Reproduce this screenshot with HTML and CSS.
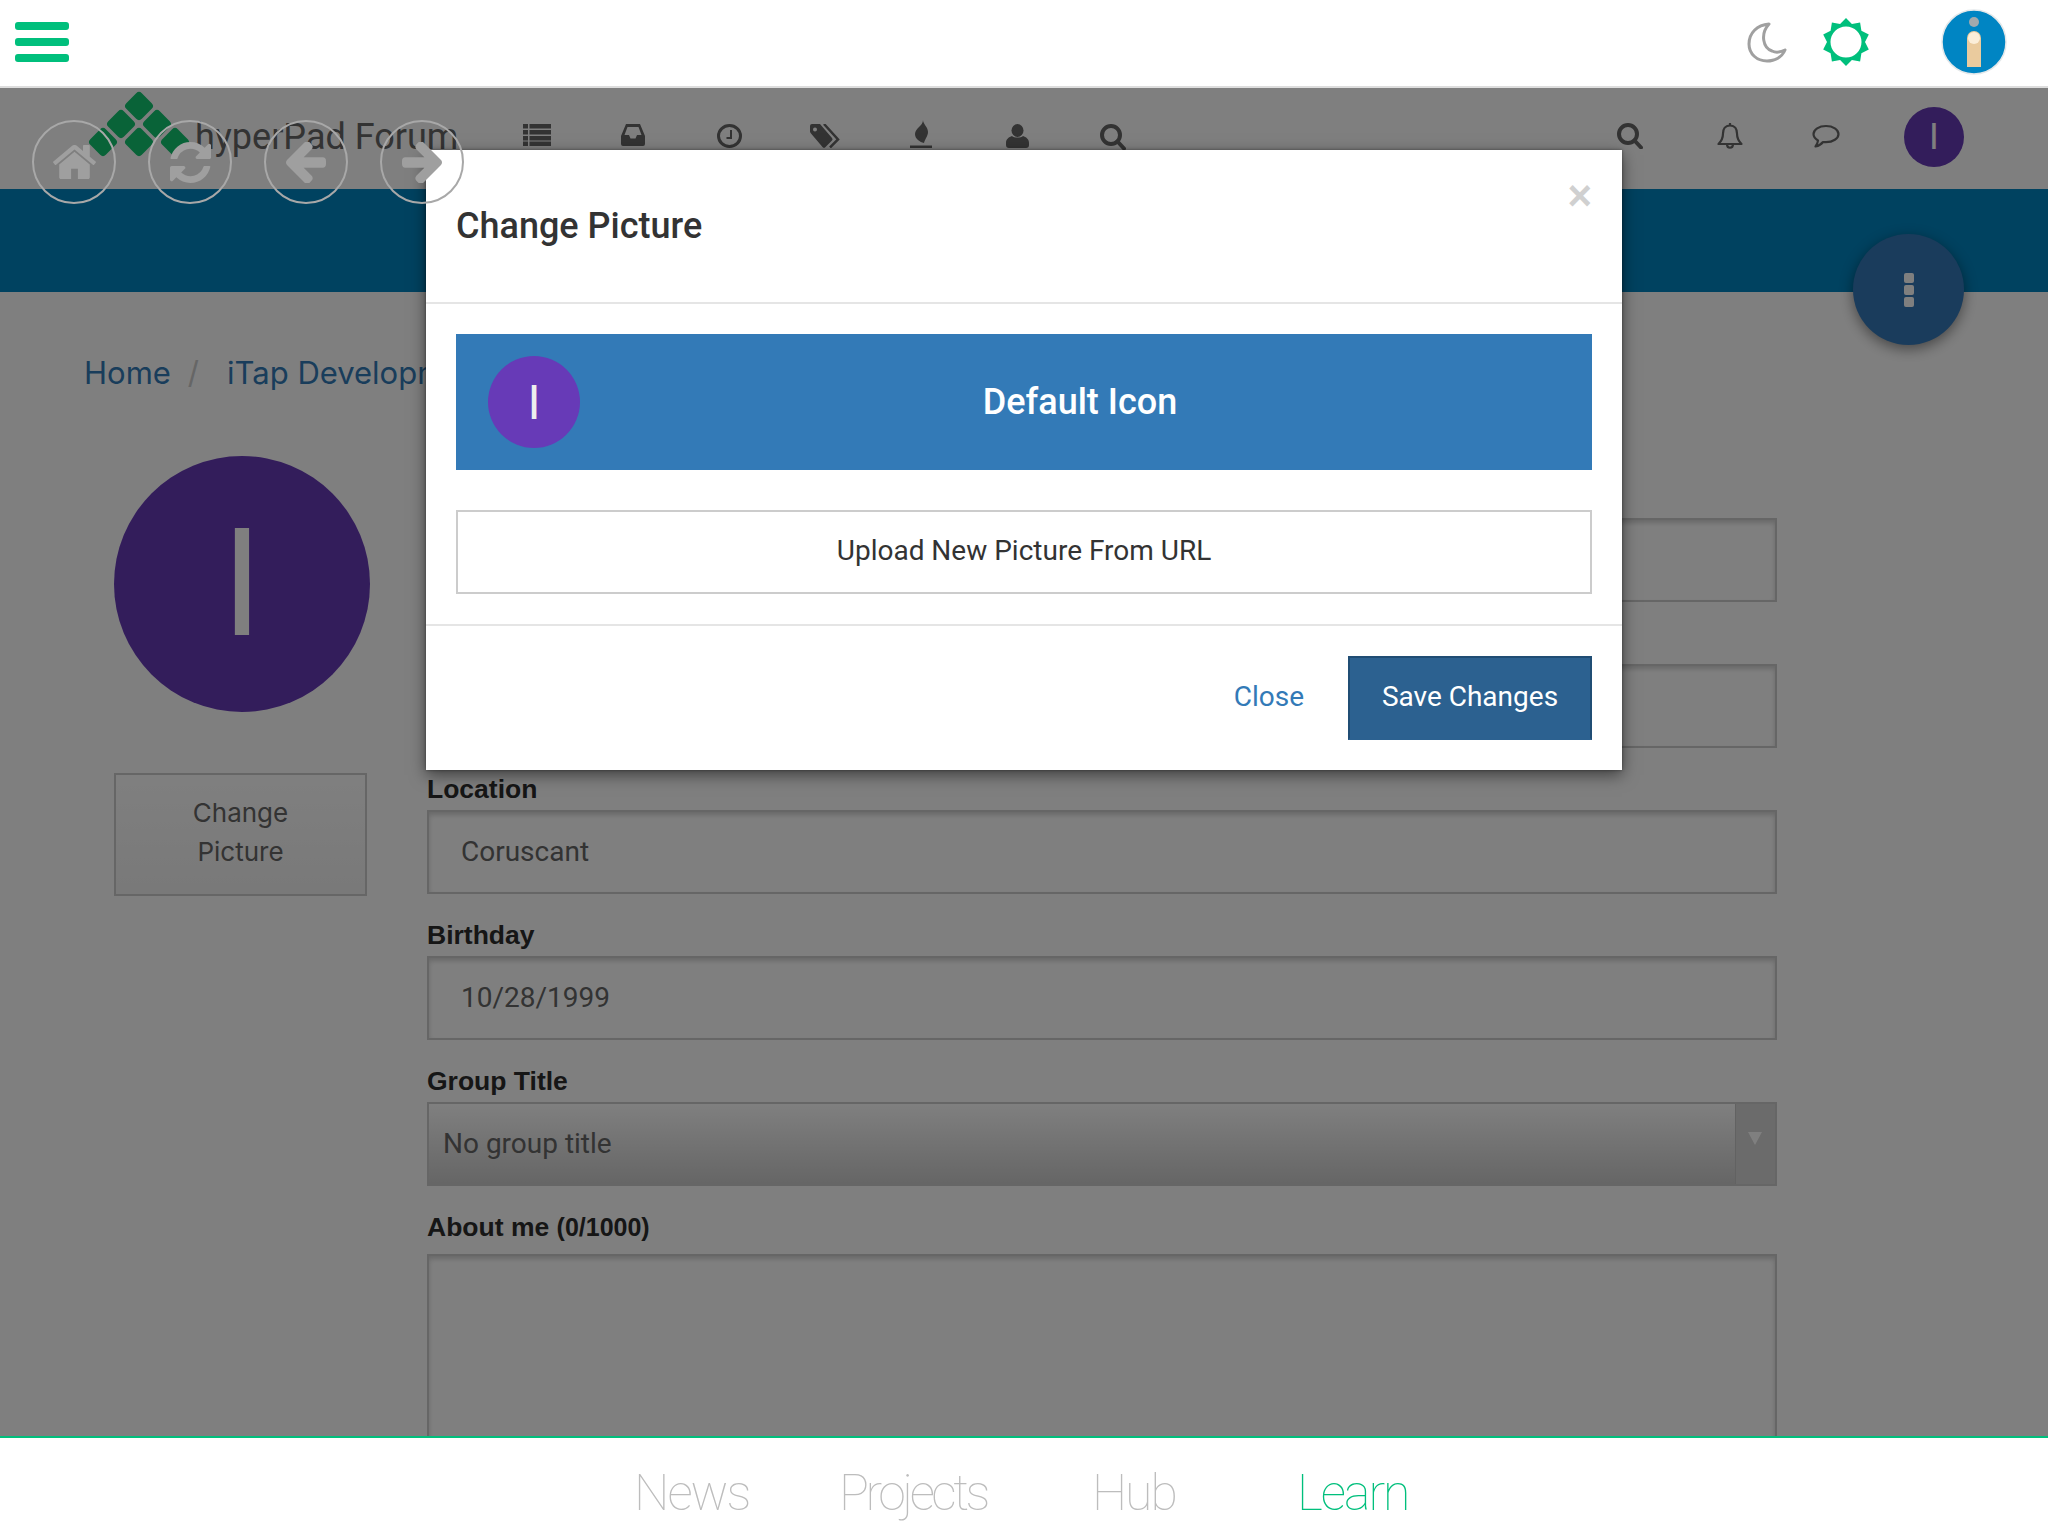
FILE: index.html
```html
<!DOCTYPE html>
<html>
<head>
    <title>hyperPad Forum - Change Picture</title>
    <link rel="stylesheet" href="styles.css">
</head>
<body>
<div class="app">
    <header class="topbar">
        <div class="burger"><span></span><span></span><span></span></div>
        <svg class="moon" viewBox="0 0 40 41"><path d="M22 2C10 3 2 11 2 22c0 10 8 17 18 17 8 0 15-4 18-11-4 2-9 3-13 1C16 26 13 12 22 2z"/></svg>
        <svg class="sun" viewBox="0 0 48 48"><path fill-rule="evenodd" d="M24 0L29.9 5.9 38.1 4.6 39.4 12.8 46.8 16.6 43 24 46.8 31.4 39.4 35.2 38.1 43.4 29.9 42.1 24 48 18.1 42.1 9.9 43.4 8.6 35.2 1.2 31.4 5 24 1.2 16.6 8.6 12.8 9.9 4.6 18.1 5.9zM24 8.5a15.5 15.5 0 1 0 0 31 15.5 15.5 0 0 0 0-31z"/></svg>
        <svg class="info-logo" viewBox="0 0 66 66">
            <circle cx="33" cy="33" r="32" fill="#0085c3" stroke="#e4e8ea" stroke-width="1.5"/>
            <circle cx="33" cy="13" r="5" fill="#a3a9ad"/>
            <rect x="26" y="22" width="14" height="36" rx="7" fill="#eacb9e"/>
            <rect x="26" y="50" width="14" height="8" fill="#eacb9e"/>
            <circle cx="33" cy="29" r="6" fill="#fbeed9"/>
        </svg>
    </header>

    <div class="stage">
        <div class="page">
            <div class="forum-header">
                <svg class="logo" viewBox="0 0 102 66">
                    <g fill="#13c671">
                        <rect x="40" y="4" width="22" height="22" rx="4" transform="rotate(45 51 15)"/>
                        <rect x="22" y="22" width="22" height="22" rx="4" transform="rotate(45 33 33)"/>
                        <rect x="58" y="22" width="22" height="22" rx="4" transform="rotate(45 69 33)"/>
                        <rect x="4" y="40" width="22" height="22" rx="4" transform="rotate(45 15 51)"/>
                        <rect x="40" y="40" width="22" height="22" rx="4" transform="rotate(45 51 51)"/>
                        <rect x="76" y="40" width="22" height="22" rx="4" transform="rotate(45 87 51)"/>
                    </g>
                </svg>
                <div class="forum-title">hyperPad Forum</div>
                <nav class="forum-nav">
                    <a class="nav-item"><svg width="28" height="22" viewBox="0 0 28 22"><path d="M0 0h5v4.500H0zM6.500 0H28v4.500H6.500zM0 6h5v4.500H0zM6.500 6H28v4.500H6.500zM0 12h5v4.500H0zM6.500 12H28v4.500H6.500zM0 17.500h5V22H0zM6.500 17.500H28V22H6.500z"/></svg></a>
                    <a class="nav-item"><svg width="24" height="22" viewBox="0 0 24 22"><path fill-rule="evenodd" d="M5 0h14l5 12v8a2 2 0 0 1-2 2H2a2 2 0 0 1-2-2v-8zM6.500 3L3.500 11H8l1.500 3.500h5L16 11h4.500l-3-8z"/></svg></a>
                    <a class="nav-item"><svg width="25" height="24" viewBox="0 0 25 24"><ellipse cx="12.500" cy="12" rx="11" ry="10.500" fill="none" stroke="#666" stroke-width="3"/><path d="M13 6h2v9H9.500v-2H13z"/></svg></a>
                    <a class="nav-item"><svg width="30" height="24" viewBox="0 0 30 24"><path fill-rule="evenodd" d="M2 0h8l12 14a2 2 0 0 1 0 2.500L15.500 23a2 2 0 0 1-3 0L1 9.500a3 3 0 0 1-1-2V2a2 2 0 0 1 2-2zM5 3.500a2 2 0 1 0 0 4 2 2 0 0 0 0-4z"/><path d="M14 0l14 15.500L20 23.500" fill="none" stroke="#666" stroke-width="2.500"/></svg></a>
                    <a class="nav-item fire"><svg width="22" height="28" viewBox="0 0 22 28"><path d="M13 0c0 4 5 7 5 12 0 4-3 7-4 11-4-1-9-4-9-9 0-6 8-8 8-14z"/><rect y="25.500" width="22" height="2.500"/></svg></a>
                    <a class="nav-item"><svg width="23" height="24" viewBox="0 0 23 24"><ellipse cx="11.500" cy="6.500" rx="6" ry="6.500"/><path d="M6 12c2 2 9 2 11 0 3 1 6 3 6 7v2a3 3 0 0 1-3 3H3a3 3 0 0 1-3-3v-2c0-4 3-6 6-7z"/></svg></a>
                    <a class="nav-item"><svg class="search" width="26" height="26" viewBox="0 0 26 26"><circle cx="11" cy="11" r="9"/><path d="M17.500 17.500L24 24.500"/></svg></a>
                </nav>
                <div class="forum-tools">
                    <a class="tool"><svg class="search" width="26" height="26" viewBox="0 0 26 26"><circle cx="11" cy="11" r="9"/><path d="M17.500 17.500L24 24.500"/></svg></a>
                    <a class="tool"><svg class="line-icon" width="26" height="28" viewBox="0 0 26 28"><path d="M13 3.500c-5 0-7 4-7 8 0 5-2 8-4.500 10.500h23C22 19.500 20 16.500 20 11.500c0-4-2-8-7-8zM13 1v2.500M10 22c0 5 6 5 6 0"/></svg></a>
                    <a class="tool"><svg class="line-icon" width="28" height="24" viewBox="0 0 28 24"><path d="M14 2C7 2 1.500 5.500 1.500 10c0 3 2 5 4.500 6.500-.2 2-1 4-2.500 6 3-.7 6-2.500 7.500-4.500 1 .2 2 .2 3 .2 7 0 12.500-3.700 12.500-8.200S21 2 14 2z"/></svg></a>
                    <div class="avatar avatar-small">I</div>
                </div>
            </div>

            <div class="band"><div class="fab"><span></span><span></span><span></span></div></div>

            <div class="breadcrumb"><a>Home</a><span class="sep">/</span><a>iTap Development</a></div>

            <div class="content">
                <aside class="sidebar">
                    <div class="avatar avatar-big">I</div>
                    <button class="change-btn">Change Picture</button>
                </aside>
                <form class="profile-form">
                    <div class="field"><div class="label"></div><input class="input"></div>
                    <div class="field"><div class="label"></div><input class="input"></div>
                    <div class="field"><label class="label">Location</label><input class="input" value="Coruscant"></div>
                    <div class="field"><label class="label">Birthday</label><input class="input" value="10/28/1999"></div>
                    <div class="field">
                        <label class="label">Group Title</label>
                        <div class="select">No group title<div class="select-arrow"></div></div>
                    </div>
                    <div class="field">
                        <label class="label">About me <small>(0/1000)</small></label>
                        <textarea class="input textarea"></textarea>
                    </div>
                </form>
            </div>
        </div>

        <div class="backdrop"></div>

        <div class="modal">
            <div class="modal-header">
                <h4>Change Picture</h4>
                <span class="modal-x">&times;</span>
            </div>
            <div class="modal-body">
                <div class="pic-default">
                    <div class="avatar avatar-modal">I</div>
                    <div class="pic-label">Default Icon</div>
                </div>
                <div class="pic-upload">Upload New Picture From URL</div>
            </div>
            <div class="modal-footer">
                <a class="btn-link">Close</a>
                <button class="btn-save">Save Changes</button>
            </div>
        </div>

        <div class="quick-nav">
            <div class="quick-btn"><svg width="43" height="34" viewBox="97 256 1598 1280"><path d="M1472 992v480q0 26-19 45t-45 19h-384v-384h-256v384h-384q-26 0-45-19t-19-45v-480q0-1 .5-3t.5-3l575-474 575 474q1 2 1 6zm223-69l-62 74q-8 9-21 11h-3q-13 0-21-7l-692-577-692 577q-12 8-24 7-13-2-21-11l-62-74q-8-10-7-23.500t11-21.500l719-599q32-26 76-26t76 26l244 204v-195q0-14 9-23t23-9h192q14 0 23 9t9 23v408l219 182q10 8 11 21.500t-7 23.500z"/></svg></div>
            <div class="quick-btn"><svg width="41" height="41" viewBox="128 128 1536 1536"><path d="M1639 1056q0 5-1 7-64 268-268 434.500t-478 166.500q-146 0-282.500-55t-243.500-157l-129 129q-19 19-45 19t-45-19-19-45v-448q0-26 19-45t45-19h448q26 0 45 19t19 45-19 45l-137 137q71 66 161 102t187 36q134 0 250-65t186-179q11-17 53-117 8-23 30-23h192q13 0 22.500 9.500t9.500 22.500zm25-800v448q0 26-19 45t-45 19h-448q-26 0-45-19t-19-45 19-45l138-138q-148-137-349-137-134 0-250 65t-186 179q-11 17-53 117-8 23-30 23h-199q-13 0-22.500-9.500t-9.500-22.500v-7q65-268 270-434.500t480-166.500q146 0 284 55.500t245 156.500l130-129q19-19 45-19t45 19 19 45z"/></svg></div>
            <div class="quick-btn"><svg width="40" height="41" viewBox="192 218 1472 1484"><path d="M1664 896v128q0 53-32.500 90.500t-84.500 37.500h-704l293 294q38 36 38 90t-38 90l-75 76q-37 37-90 37-52 0-91-37l-651-652q-37-37-37-90 0-52 37-91l651-650q38-38 91-38 52 0 90 38l75 74q38 38 38 91t-38 91l-293 293h704q52 0 84.500 37.500t32.500 90.500z"/></svg></div>
            <div class="quick-btn"><svg width="40" height="41" viewBox="128 218 1472 1484"><path d="M1600 960q0 54-37 91l-651 651q-39 37-91 37-51 0-90-37l-75-75q-38-38-38-91t38-91l293-293h-704q-52 0-84.500-37.500t-32.500-90.500v-128q0-53 32.500-90.500t84.500-37.500h704l-293-294q-38-36-38-90t38-90l75-75q38-38 90-38 53 0 91 38l651 651q37 35 37 90z"/></svg></div>
        </div>
    </div>

    <footer class="bottom-nav">
        <a class="tab tab-news">News</a>
        <a class="tab tab-projects">Projects</a>
        <a class="tab tab-hub">Hub</a>
        <a class="tab active">Learn</a>
    </footer>
</div>
</body>
</html>
```

FILE: styles.css
```css
* { box-sizing: border-box; }
body { margin: 0; font-family: Roboto, sans-serif; color: #333; background: #fff; }
.app { width: 2048px; height: 1536px; display: flex; flex-direction: column; overflow: hidden; }

/* top bar */
.topbar { height: 88px; flex: none; display: flex; align-items: center; background: #fff; border-bottom: 2px solid #ddd; padding-bottom: 2px; }
.burger { width: 54px; margin-left: 15px; display: flex; flex-direction: column; gap: 7.5px; }
.burger span { height: 8.500px; background: #00bf7c; border-radius: 3px; }
.moon { width: 40px; height: 41px; margin-left: auto; fill: none; stroke: #a0a0a0; stroke-width: 3; stroke-linejoin: round; }
.sun { width: 48px; height: 48px; margin-left: 35px; fill: #00bf7c; }
.info-logo { width: 66px; height: 66px; margin-left: 71px; margin-right: 41px; }

/* page under the dialog */
.stage { flex: 1; position: relative; overflow: hidden; background: #fff; }
.forum-header { height: 101px; display: flex; align-items: center; padding-bottom: 6px; background: #fff; }
.logo { width: 102px; height: 66px; margin-left: 88px; margin-bottom: 24px; flex: none; }
.forum-title { margin-left: 5px; width: 294px; padding-top: 2px; font-size: 36px; color: #666; white-space: nowrap; }
.forum-nav { display: flex; padding-top: 3px; }
.nav-item { width: 96px; display: flex; justify-content: center; fill: #666; }
.fire { margin-top: -4px; }
.forum-tools { margin-left: auto; display: flex; align-items: center; margin-right: 84px; fill: #666; }
.tool { width: 96px; display: flex; justify-content: center; }
.tool:first-child { margin-right: 4px; }
.tool:nth-child(3) { margin-right: 14px; }
.search { fill: none; stroke: #666; stroke-width: 4; stroke-linecap: round; }
.line-icon { fill: none; stroke: #666; stroke-width: 2.200; stroke-linejoin: round; }
.avatar { border-radius: 50%; background: #673ab7; color: #fff; display: flex; align-items: center; justify-content: center; flex: none; }
.avatar-small { width: 60px; height: 60px; font-size: 36px; margin-left: 16px; margin-top: 3px; }
.band { height: 103px; background: #0084c0; position: relative; }
.fab { position: absolute; left: 1853px; top: 45px; width: 111px; height: 111px; border-radius: 50%; background: #3578b8; box-shadow: 0 4px 14px rgba(0,0,0,.45); display: flex; flex-direction: column; align-items: center; justify-content: center; gap: 2px; }
.fab span { width: 10px; height: 10px; background: #fff; border-radius: 2px; }
.breadcrumb { margin: 60px 0 62px 84px; height: 42px; line-height: 42px; font-family: Inter, sans-serif; font-size: 31px; color: #337ab7; white-space: nowrap; }
.breadcrumb .sep { color: #ccc; margin: 0 28px 0 17px; }
.content { display: flex; margin-left: 114px; gap: 57px; }
.sidebar { width: 256px; flex: none; }
.avatar-big { width: 256px; height: 256px; font-size: 150px; }
.change-btn { display: block; width: 253px; height: 123px; margin-top: 61px; padding: 0 50px 6px; border: 2px solid #ccc; background: linear-gradient(#fff, #f2f2f2); font-family: Inter, sans-serif; font-size: 26px; line-height: 39px; color: #666; }
.profile-form { width: 1350px; margin-top: 26px; }
.field { margin-bottom: 26px; }
.label { display: block; height: 32px; margin-bottom: 4px; font-family: "Liberation Sans", sans-serif; font-weight: bold; font-size: 26.500px; line-height: 30px; color: #2c2c2c; }
.label small { font-size: 25px; }
.input { display: block; width: 100%; height: 84px; padding: 0 32px 2px; border: 2px solid #ccc; background: #fff; box-shadow: inset 0 3px 5px rgba(0,0,0,.18); font-family: Roboto, sans-serif; font-size: 28px; color: #666; }
.textarea { height: 300px; margin-top: 10px; resize: none; }
.select { position: relative; height: 84px; line-height: 80px; padding-left: 14px; border: 2px solid #ccc; background: linear-gradient(#fff, #ccc); font-size: 28px; color: #666; }
.select-arrow { position: absolute; right: 0; top: 0; bottom: 0; width: 40px; background: #d6d6d6; border-left: 1px solid #c4c4c4; }
.select-arrow::after { content: ""; position: absolute; left: 12px; top: 28px; border: 7px solid transparent; border-top: 13px solid #fff; border-bottom: 0; }

.backdrop { position: absolute; inset: 0; background: rgba(0,0,0,.5); z-index: 1; }

/* dialog */
.modal { position: absolute; left: 426px; top: 62px; width: 1196px; background: #fff; box-shadow: 0 5px 15px rgba(0,0,0,.5), 0 0 3px rgba(0,0,0,.4); z-index: 2; }
.modal-header { height: 154px; padding: 53px 30px 0; border-bottom: 2px solid #e5e5e5; position: relative; }
.modal-header h4 { margin: 0; font-size: 36px; font-weight: 500; line-height: 46px; color: #333; }
.modal-x { position: absolute; right: 30px; top: 21px; font-family: "Liberation Sans", sans-serif; font-weight: bold; font-size: 42px; line-height: 50px; color: #d0d0d0; }
.modal-body { padding: 30px; display: flex; flex-direction: column; gap: 40px; }
.pic-default { height: 136px; display: flex; align-items: center; background: #337ab7; padding-left: 32px; padding-right: 12px; }
.avatar-modal { width: 92px; height: 92px; font-size: 48px; color: #eee; }
.pic-label { flex: 1; text-align: center; color: #fff; font-size: 36px; font-weight: 500; }
.pic-upload { height: 84px; line-height: 78px; text-align: center; border: 2px solid #ccc; font-size: 28px; color: #333; }
.modal-footer { height: 146px; padding: 30px; border-top: 2px solid #e5e5e5; display: flex; justify-content: flex-end; align-items: center; gap: 44px; }
.btn-link { font-size: 28px; color: #337ab7; margin-top: -3px; }
.btn-save { width: 244px; height: 84px; padding-bottom: 4px; background: #2c6190; border: 2px solid #204d74; border-bottom-color: #2c6190; color: #fff; font-family: Roboto, sans-serif; font-size: 28px; }

/* round shortcuts, they float over everything */
.quick-nav { position: absolute; left: 32px; top: 32px; display: flex; gap: 32px; z-index: 3; }
.quick-btn { width: 84px; height: 84px; border-radius: 50%; border: 2px solid #a8a8a8; display: flex; align-items: center; justify-content: center; fill: #9f9f9f; }

/* bottom tabs */
.bottom-nav { height: 100px; flex: none; display: flex; align-items: center; padding-left: 634px; background: #fff; border-top: 2px solid #00bf7c; padding-top: 12px; }
.tab { font-family: Roboto, sans-serif; font-weight: 100; font-size: 50px; letter-spacing: -2px; color: #bdbdbd; }
.tab.active { color: #00bf7c; }
.tab-news { width: 205px; }
.tab-projects { width: 253px; letter-spacing: -3.500px; }
.tab-hub { width: 205px; }
```
